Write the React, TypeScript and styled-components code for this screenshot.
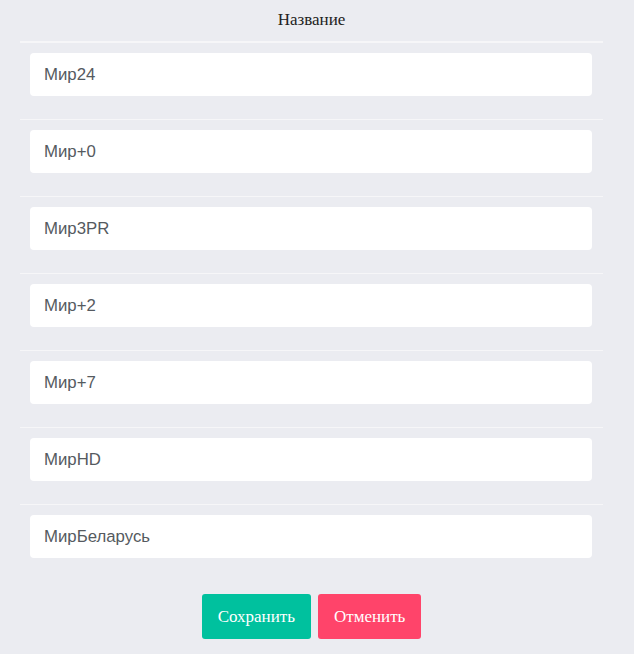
import { createGlobalStyle, styled } from "styled-components";

const GlobalStyle = createGlobalStyle`
    html, body {
        margin: 0;
        padding: 0;
        background: #ebecf1;
    }
    * { box-sizing: border-box; }
`

const Wrapper = styled.div`
    padding: 0 31px 15px 20px;
    display: flex;
    flex-direction: column;
`
const Header = styled.div`
    height: 43px;
    padding-top: 10px;
    text-align: center;
    font-family: "Liberation Serif", serif;
    font-size: 17px;
    line-height: 20px;
    color: #222;
    border-bottom: 2px solid #f6f6f8;
`
const Row = styled.div<{ $last?: boolean }>`
    height: ${(p) => (p.$last ? "76px" : "77px")};
    padding: 10px 11px 0 10px;
    border-bottom: ${(p) => (p.$last ? "none" : "1px solid #f6f6f8")};
`
const Field = styled.input`
    display: block;
    width: 100%;
    height: 43px;
    border: 0;
    border-radius: 4px;
    background: #fff;
    padding: 0 14px;
    font-family: "Liberation Sans", Arial, sans-serif;
    font-size: 16.8px;
    color: #555a60;
    outline: none;
`
const Actions = styled.div`
    display: flex;
    justify-content: center;
    gap: 7px;
    margin-top: 13px;
`
const Button = styled.button<{ $color: string }>`
    height: 45px;
    padding: 0 16px;
    border: 0;
    border-radius: 3px;
    background: ${(p) => p.$color};
    color: #fff;
    font-family: "Liberation Serif", serif;
    font-size: 17px;
    cursor: pointer;
`

const channels = ["Мир24", "Мир+0", "Мир3PR", "Мир+2", "Мир+7", "МирHD", "МирБеларусь"];

export default function App() {
    return (
        <>
            <GlobalStyle />
            <Wrapper>
                <Header>Название</Header>
                {channels.map((name, i) => (
                    <Row key={name} $last={i === channels.length - 1}>
                        <Field defaultValue={name} />
                    </Row>
                ))}
                <Actions>
                    <Button $color="#00c19e">Сохранить</Button>
                    <Button $color="#ff446a">Отменить</Button>
                </Actions>
            </Wrapper>
        </>
    )
}
